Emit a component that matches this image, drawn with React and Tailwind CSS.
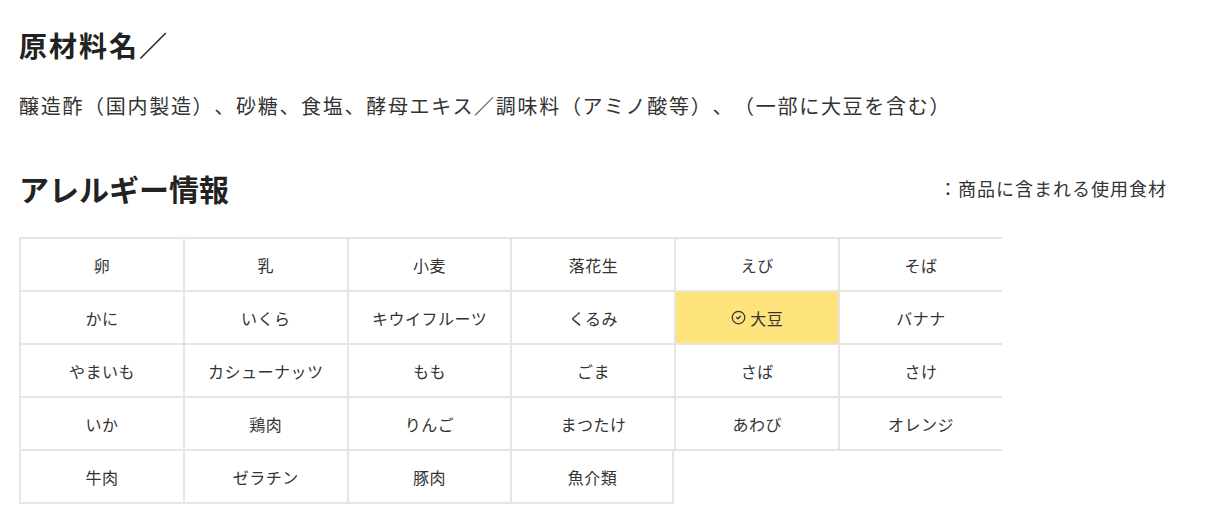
import React from "react";
import { CircleCheck } from "lucide-react";

const allergens = [
  "卵", "乳", "小麦", "落花生", "えび", "そば",
  "かに", "いくら", "キウイフルーツ", "くるみ", "大豆", "バナナ",
  "やまいも", "カシューナッツ", "もも", "ごま", "さば", "さけ",
  "いか", "鶏肉", "りんご", "まつたけ", "あわび", "オレンジ",
  "牛肉", "ゼラチン", "豚肉", "魚介類",
];

const used = ["大豆"];

const font = { fontFamily: '"Noto Sans CJK JP", "Noto Sans", sans-serif' };

export default function App() {
  return (
    <div
      className="bg-white text-[#333] w-[1224px] h-[507px] overflow-hidden pl-[19px] [text-spacing-trim:space-all]"
      style={font}
    >
      {/* Ingredients */}
      <h2 className="pt-[26px] text-[28px] leading-[38px] font-bold text-[#222] tracking-[2px]">原材料名／</h2>
      <p className="mt-[27px] text-[20px] leading-[30px] tracking-[1.7px]">
        醸造酢（国内製造）、砂糖、食塩、酵母エキス／調味料（アミノ酸等）、（一部に大豆を含む）
      </p>

      {/* Allergen header */}
      <div className="mt-[47px] flex items-center justify-between w-[1148px]">
        <h2 className="text-[30px] leading-[40px] font-bold text-[#222]">アレルギー情報</h2>
        <span className="text-[18px] leading-[26px] text-[#333] tracking-[1px]">：商品に含まれる使用食材</span>
      </div>

      {/* Allergen grid */}
      <div className="mt-[29px] grid grid-cols-6 w-[983px] border-t-2 border-[#e8e4de]">
        {allergens.map((name, i) => {
          const active = used.includes(name);
          return (
            <div
              key={name}
              className={`h-[53px] flex items-center justify-center gap-1 text-[16px] tracking-[0.5px] border-l-2 border-b-2 border-[#e8e4de] ${
                active ? "bg-[#fee27b]" : "bg-white"
              } ${i === allergens.length - 1 ? "border-r-2" : ""}`}
            >
              {active && <CircleCheck className="w-[15px] h-[15px]" strokeWidth={2} />}
              {name}
            </div>
          );
        })}
      </div>
    </div>
  );
}
